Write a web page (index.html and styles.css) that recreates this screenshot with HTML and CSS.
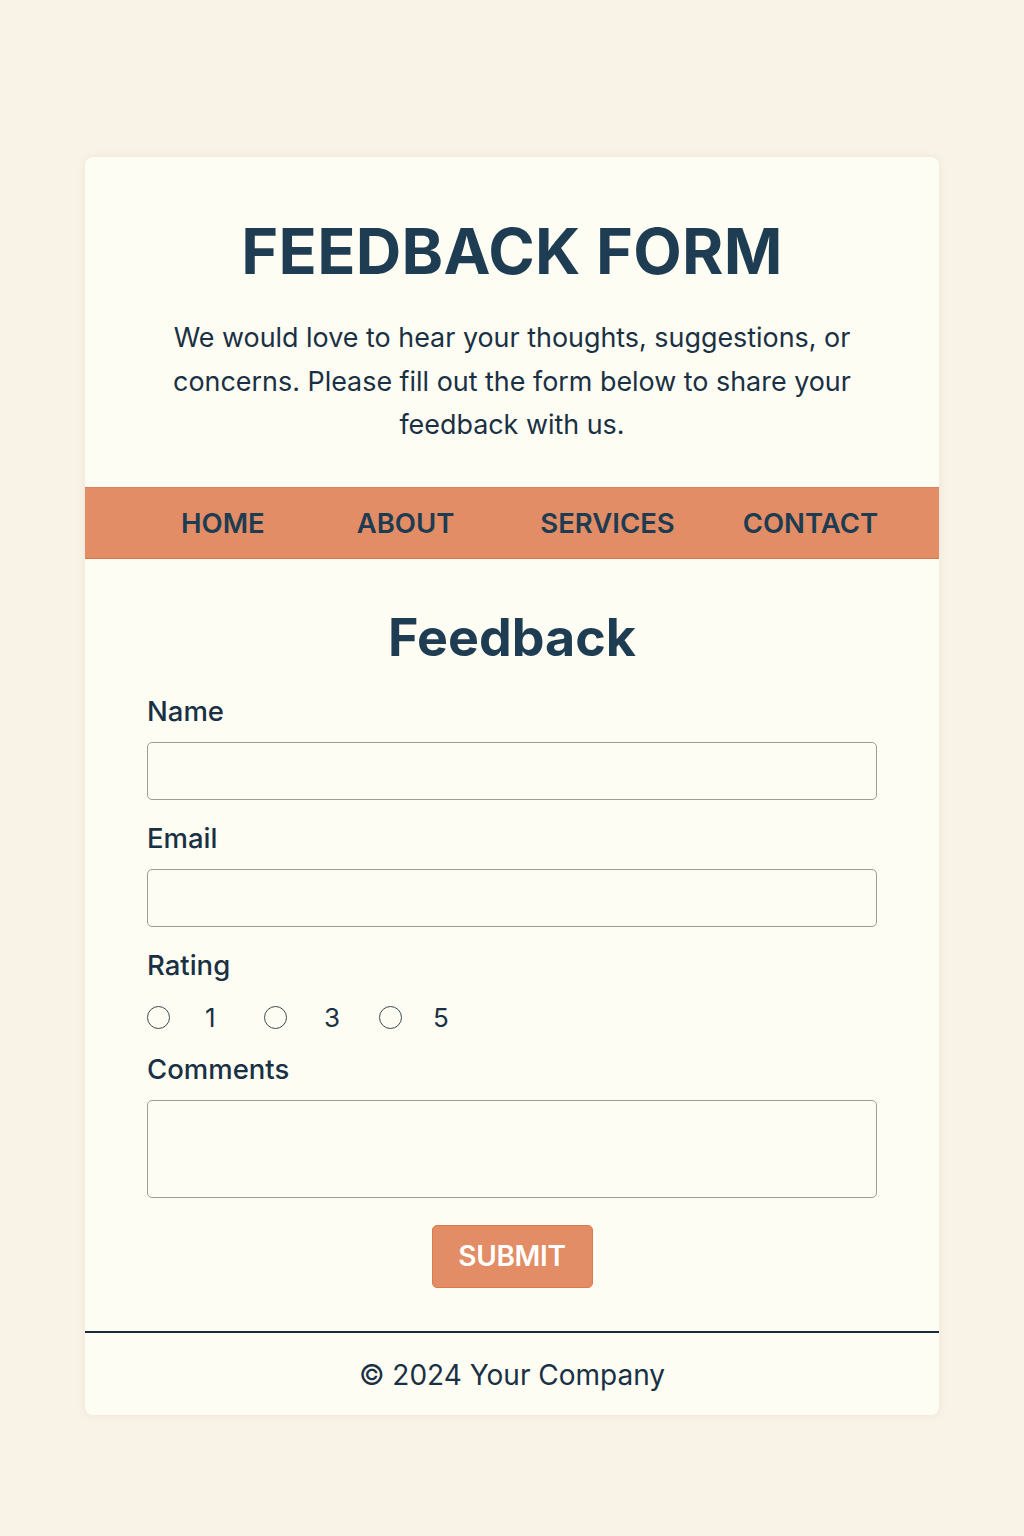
FILE: index.html
```html
<!DOCTYPE html>
<html lang="en">
<head>
<meta charset="utf-8">
<title>Feedback Form</title>
<link rel="stylesheet" href="styles.css">
</head>
<body>
<div class="card">
  <header class="header">
    <h1 class="title">FEEDBACK FORM</h1>
    <p class="intro">We would love to hear your thoughts, suggestions, or concerns. Please fill out the form below to share your feedback with us.</p>
  </header>
  <nav class="nav">
    <a class="nav-link" href="#">HOME</a>
    <a class="nav-link" href="#">ABOUT</a>
    <a class="nav-link" href="#">SERVICES</a>
    <a class="nav-link" href="#">CONTACT</a>
  </nav>
  <main class="main">
    <h2 class="form-title">Feedback</h2>
    <form class="form">
      <label class="label" for="name">Name</label>
      <input class="field" id="name" type="text">
      <label class="label" for="email">Email</label>
      <input class="field" id="email" type="email">
      <span class="label">Rating</span>
      <div class="rating">
        <label class="rate"><span class="radio"></span><span class="rate-num">1</span></label>
        <label class="rate"><span class="radio"></span><span class="rate-num">3</span></label>
        <label class="rate"><span class="radio"></span><span class="rate-num">5</span></label>
      </div>
      <label class="label" for="comments">Comments</label>
      <textarea class="field area" id="comments"></textarea>
      <div class="actions"><button class="submit" type="button">SUBMIT</button></div>
    </form>
  </main>
  <footer class="footer">© 2024 Your Company</footer>
</div>
</body>
</html>
```
FILE: styles.css
```css
* { box-sizing: border-box; }
html, body { margin: 0; padding: 0; }
body {
  background: #f9f3e7;
  font-family: Inter, "Noto Sans", sans-serif;
  color: #1a3044;
  padding: 157px 85px 120px;
}
.card {
  background: #fefdf3;
  border-radius: 8px;
  box-shadow: 0 0 8px rgba(150, 120, 80, 0.12);
  overflow: hidden;
}
.header {
  padding: 56px 60px 40px;
  text-align: center;
}
.title {
  margin: 0;
  font-size: 63px;
  font-weight: 700;
  letter-spacing: 0.3px;
  color: #1f3d52;
  line-height: 76px;
}
.intro {
  margin: 27px auto 0;
  font-size: 26.9px;
  line-height: 43.5px;
  max-width: 700px;
  color: #1a3044;
}
.nav {
  background: #e28d65;
  border-top: 1px solid #e08258;
  border-bottom: 1px solid #dd7548;
  height: 72px;
  display: flex;
  align-items: center;
  padding: 0 0 0 96px;
}
.nav-link {
  color: #1d3c52;
  text-decoration: none;
  font-size: 27.5px;
  font-weight: 600;
}
.nav-link:nth-child(2) { margin-left: 92px; }
.nav-link:nth-child(3) { margin-left: 86px; }
.nav-link:nth-child(4) { margin-left: 68px; }
.main {
  padding: 48px 62px 43px;
}
.form-title {
  margin: 0;
  text-align: center;
  font-size: 52px;
  font-weight: 700;
  line-height: 62px;
  color: #1f3d52;
}
.form {
  display: flex;
  flex-direction: column;
  margin-top: 26px;
}
.label {
  font-size: 27.5px;
  font-weight: 500;
  line-height: 32px;
  color: #1a3044;
  margin-bottom: 15px;
}
.field {
  display: block;
  width: 100%;
  height: 58px;
  border: 1.5px solid #9c9c98;
  border-radius: 5px;
  background: #fefdf3;
  margin-bottom: 22px;
  font: inherit;
}
.area {
  height: 98px;
  resize: none;
  margin-bottom: 27px;
}
.rating {
  display: flex;
  align-items: center;
  margin: 5px 0 18px;
  height: 34px;
}
.rate {
  display: flex;
  align-items: center;
}
.rate:nth-child(1) { width: 117px; }
.rate:nth-child(2) { width: 115px; }
.radio {
  width: 23px;
  height: 23px;
  border: 1.5px solid #3d4a52;
  border-radius: 50%;
  background: #fefdf3;
}
.rate-num {
  font-size: 26px;
  margin-left: 35px;
  color: #1a3044;
}
.rate:nth-child(2) .rate-num { margin-left: 37px; }
.rate:nth-child(3) .rate-num { margin-left: 31px; }
.actions {
  display: flex;
  justify-content: center;
}
.submit {
  width: 161px;
  height: 63px;
  background: #e28d65;
  border: 1.5px solid #dd7a4c;
  border-radius: 5px;
  color: #ffffff;
  font-family: inherit;
  font-size: 28px;
  font-weight: 600;
  letter-spacing: -0.3px;
}
.footer {
  border-top: 2px solid #1b2a3e;
  text-align: center;
  font-size: 28px;
  line-height: 36px;
  padding: 24px 0 22px;
  color: #1a3044;
}
```
